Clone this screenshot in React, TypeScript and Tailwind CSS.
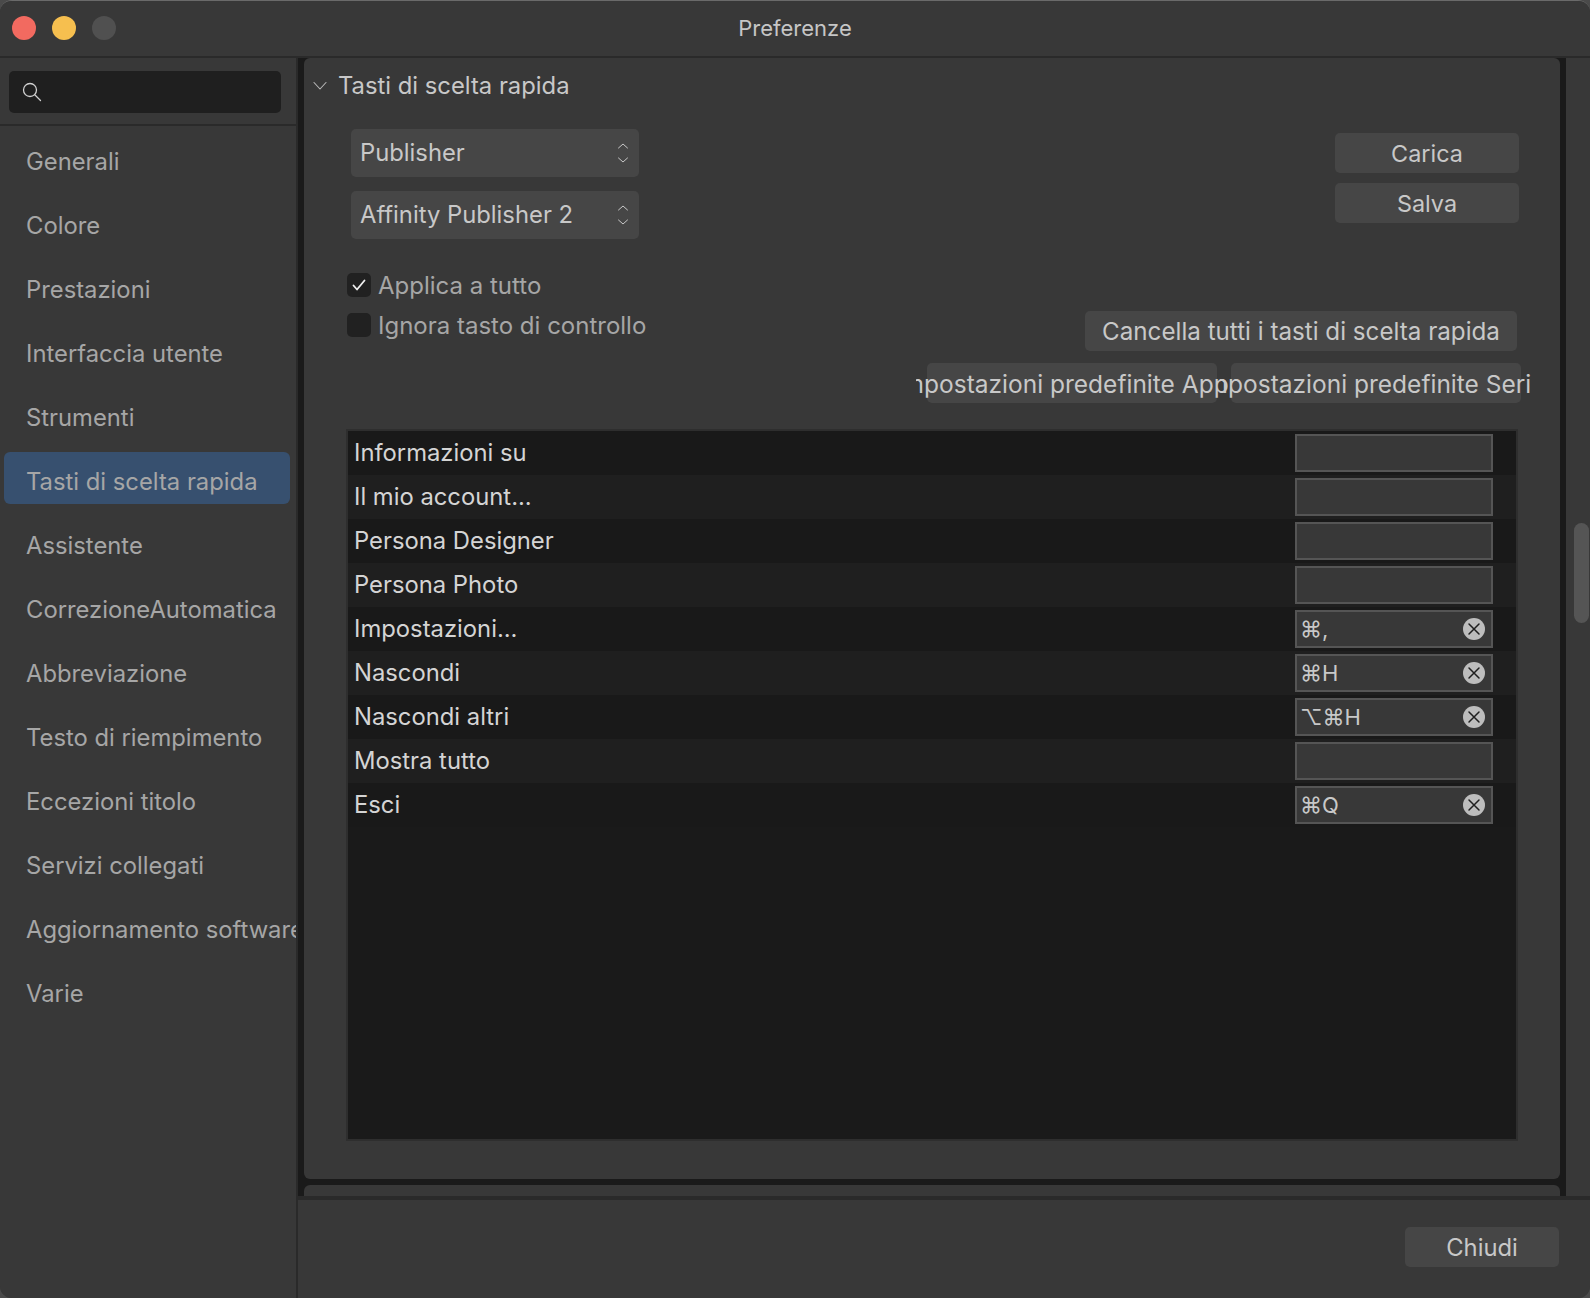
import React from "react";

const items = ["Generali","Colore","Prestazioni","Interfaccia utente","Strumenti","Tasti di scelta rapida","Assistente","CorrezioneAutomatica","Abbreviazione","Testo di riempimento","Eccezioni titolo","Servizi collegati","Aggiornamento software","Varie"];
const rows: [string, string][] = [["Informazioni su",""],["Il mio account...",""],["Persona Designer",""],["Persona Photo",""],["Impostazioni...","⌘,"],["Nascondi","⌘H"],["Nascondi altri","⌥⌘H"],["Mostra tutto",""],["Esci","⌘Q"]];

function Stepper() {
  return (
    <svg width="12" height="24" viewBox="0 0 12 24" fill="none" stroke="#c8c8c8" strokeWidth="1" strokeLinecap="round" strokeLinejoin="round">
      <path d="M1.5 7 6 3l4.5 4" />
      <path d="M1.5 17 6 21l4.5-4" />
    </svg>
  );
}

function Btn({ className, children }: { className: string; children: React.ReactNode }) {
  return <div className={"flex items-center justify-center rounded-[5px] bg-[#464646] text-[#c8c8c8] whitespace-nowrap " + className}>{children}</div>;
}

export default function App() {
  return (
    <div className="w-[1590px] h-[1298px] bg-[#4a4a4a]" style={{ fontFamily: "Inter, 'DejaVu Sans', sans-serif" }}>
      <div className="w-full h-full flex flex-col overflow-hidden rounded-[12px] bg-[#383838] border-t border-[#6a6a6a] text-[23.8px] leading-[28px]">
        <div className="relative h-[55px] shrink-0 flex items-center justify-center pb-[2px] bg-[#383838] text-[22px] text-[#c6c6c6]">
          <div className="absolute left-[12px] top-[15px] flex gap-[16px]">
            <div className="w-[24px] h-[24px] rounded-full bg-[#f26a60]" />
            <div className="w-[24px] h-[24px] rounded-full bg-[#f6bf4f]" />
            <div className="w-[24px] h-[24px] rounded-full bg-[#505050]" />
          </div>
          Preferenze
        </div>
        <div className="h-[2px] shrink-0 bg-[#2a2a2a]" />
        <div className="flex-1 flex min-h-0">
          <aside className="w-[296px] shrink-0 flex flex-col overflow-hidden bg-[#383838]">
            <div className="h-[66px] shrink-0 pt-[13px] px-[9px]">
              <div className="h-[42px] w-[272px] rounded-[5px] bg-[#1f1f1f] flex items-center pl-[13px]">
                <svg width="20" height="20" viewBox="0 0 20 20" fill="none" stroke="#d0d0d0" strokeWidth="1.3" strokeLinecap="round">
                  <circle cx="8" cy="8" r="6.5" />
                  <path d="m13 13 5.5 5.5" />
                </svg>
              </div>
            </div>
            <div className="h-[2px] shrink-0 bg-[#2a2a2a]" />
            <nav className="flex flex-col gap-[12px] pt-[6px] pl-[4px]">
              {items.map((t) => (
                <div key={t} className={"w-[286px] h-[52px] shrink-0 flex items-center pl-[22px] pt-[8px] rounded-[6px] whitespace-nowrap text-[#a6a6a6] " + (t === "Tasti di scelta rapida" ? "bg-[#37506f]" : "")}>{t}</div>
              ))}
            </nav>
          </aside>
          <div className="w-[2px] shrink-0 bg-[#2a2a2a]" />
          <div className="relative flex-1 flex flex-col min-w-0">
            <div className="flex-1 min-h-0 flex overflow-hidden">
              <div className="w-[1268px] shrink-0 bg-[#1a1a1a] px-[6px] flex flex-col gap-[6px] overflow-hidden">
                <section className="h-[1121px] shrink-0 rounded-[6px] bg-[#383838] flex flex-col">
                  <div className="h-[56px] shrink-0 flex items-center">
                    <svg className="ml-[9px]" width="14" height="10" viewBox="0 0 14 10" fill="none" stroke="#b8b8b8" strokeWidth="1.1" strokeLinecap="round" strokeLinejoin="round">
                      <path d="M1 1.5 7 8l6-6.5" />
                    </svg>
                    <span className="ml-[11px] text-[#c8c8c8]">Tasti di scelta rapida</span>
                  </div>
                  <div className="h-[315px] shrink-0 flex justify-between pl-[47px] pt-[15px]">
                    <div className="flex flex-col">
                      <div className="w-[288px] h-[48px] rounded-[5px] bg-[#464646] flex items-center justify-between pl-[9px] pr-[10px] text-[#c8c8c8]">Publisher<Stepper /></div>
                      <div className="mt-[14px] w-[288px] h-[48px] rounded-[5px] bg-[#464646] flex items-center justify-between pl-[9px] pr-[10px] text-[#c8c8c8]">Affinity Publisher 2<Stepper /></div>
                      <div className="mt-[34px] -ml-[4px] flex items-center h-[24px] text-[#a6a6a6] text-[24px]">
                        <div className="w-[24px] h-[24px] rounded-[5px] bg-[#212121] flex items-center justify-center mr-[7px]">
                          <svg width="14" height="12" viewBox="0 0 14 12" fill="none" stroke="#f0f0f0" strokeWidth="1.8" strokeLinecap="round" strokeLinejoin="round"><path d="m1.5 6.5 3.5 4L12.5 1.5" /></svg>
                        </div>
                        <span className="pt-[1px]">Applica a tutto</span>
                      </div>
                      <div className="mt-[16px] -ml-[4px] flex items-center h-[24px] text-[#a6a6a6] text-[24px]">
                        <div className="w-[24px] h-[24px] rounded-[5px] bg-[#212121] mr-[7px]" />
                        <span className="pt-[1px]">Ignora tasto di controllo</span>
                      </div>
                    </div>
                    <div className="flex flex-col items-end pr-[39px] pt-[4px]">
                      <Btn className="w-[184px] h-[40px] mr-[2px] pt-[2px] text-[23.4px]">Carica</Btn>
                      <Btn className="w-[184px] h-[40px] mt-[10px] mr-[2px] pt-[2px] text-[23.4px]">Salva</Btn>
                      <Btn className="w-[432px] h-[40px] mt-[88px] mr-[4px] pt-[2px] text-[24.2px]">Cancella tutti i tasti di scelta rapida</Btn>
                      <div className="mt-[12px] flex gap-[14px]">
                        <Btn className="w-[290px] h-[40px] !justify-start pt-[2px] text-[24.5px]"><span className="-ml-[11px] w-[313px] shrink-0 overflow-hidden block"><span className="-ml-[20px] inline-block">Impostazioni predefinite App</span></span></Btn>
                        <Btn className="w-[290px] h-[40px] !justify-start pt-[2px] text-[24.5px]"><span className="-ml-[11px] w-[313px] shrink-0 overflow-hidden block"><span className="-ml-[20px] inline-block">Impostazioni predefinite Seri</span></span></Btn>
                      </div>
                    </div>
                  </div>
                  <div className="ml-[42px] w-[1172px] h-[712px] shrink-0 border-2 border-[#2e2e2e] bg-[#1a1a1a]">
                    {rows.map(([label, key], i) => (
                      <div key={label} className={"h-[44px] flex items-center justify-between pl-[6px] pr-[23px] " + (i % 2 === 0 ? "bg-[#191919]" : "bg-[#1f1f1f]")}>
                        <span className="text-[#d4d4d4]">{label}</span>
                        <div className="w-[198px] h-[38px] border-2 border-[#555555] bg-[#383838] flex items-center justify-between pl-[3px] pr-[6px] text-[#c8c8c8] text-[22px]">
                          {key}
                          {key && (
                            <svg width="22" height="22" viewBox="0 0 22 22">
                              <circle cx="11" cy="11" r="11" fill="#bdbdbd" />
                              <path d="m6 6 10 10m0-10L6 16" stroke="#1f1f1f" strokeWidth="1.5" strokeLinecap="round" />
                            </svg>
                          )}
                        </div>
                      </div>
                    ))}
                  </div>
                </section>
                <section className="h-[40px] shrink-0 rounded-t-[6px] bg-[#383838]" />
              </div>
              <div className="flex-1 bg-[#383838]" />
            </div>
            <div className="h-[4px] shrink-0 bg-[#2a2a2a]" />
            <div className="h-[98px] shrink-0 bg-[#383838] flex justify-end pt-[27px] pr-[31px]">
              <Btn className="w-[154px] h-[40px] pt-[2px]">Chiudi</Btn>
            </div>
            <div className="absolute left-[1276px] top-[465px] w-[15px] h-[100px] rounded-full bg-[#555555]" />
          </div>
        </div>
      </div>
    </div>
  );
}
